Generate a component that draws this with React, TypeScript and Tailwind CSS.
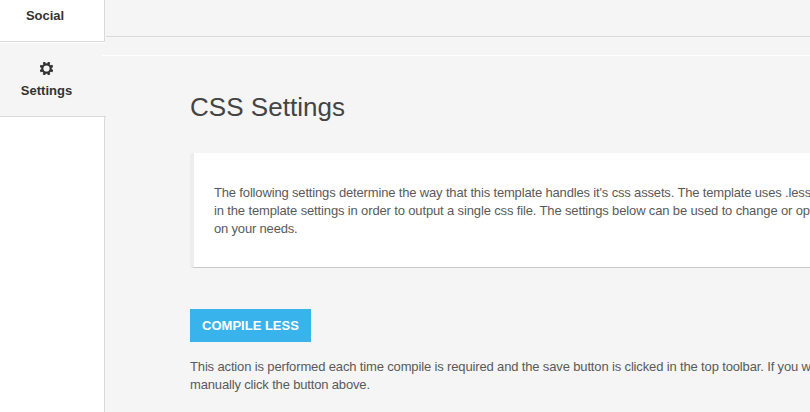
import React from "react";

interface TextLine {
  text: string;
  className: string;
}

const introLines: TextLine[] = [
  {
    text: "The following settings determine the way that this template handles it's css assets. The template uses .less",
    className: "tracking-[-0.16px]",
  },
  {
    text: "in the template settings in order to output a single css file. The settings below can be used to change or op",
    className: "tracking-[-0.14px]",
  },
  { text: "on your needs.", className: "tracking-[-0.18px]" },
];

const actionLines: TextLine[] = [
  {
    text: "This action is performed each time compile is required and the save button is clicked in the top toolbar. If you w",
    className: "tracking-[-0.145px]",
  },
  {
    text: "manually click the button above.",
    className: "tracking-[-0.16px]",
  },
];

const toothAngles = [0, 45, 90, 135, 180, 225, 270, 315];

const GearIcon: React.FC = () => (
  <svg width="13" height="13" viewBox="0 0 13 13" className="block">
    <circle
      cx="6.5"
      cy="6.5"
      r="4.2"
      fill="none"
      stroke="#333"
      strokeWidth="2.2"
    />
    {toothAngles.map((angle) => (
      <path
        key={angle}
        d="M5.1 1.8 5.3-0.4H7.7L7.9 1.8Z"
        fill="#333"
        transform={`rotate(${angle + 22.5} 6.5 6.5)`}
      />
    ))}
  </svg>
);

const Paragraph: React.FC<{ lines: TextLine[] }> = ({ lines }) => (
  <p className="text-[13px] leading-[18px] text-[#5a5a5a]">
    {lines.map((line) => (
      <span key={line.text} className="block whitespace-nowrap">
        <span className={line.className}>{line.text}</span>
      </span>
    ))}
  </p>
);

const App: React.FC = () => {
  return (
    <div className="flex h-[412px] w-full overflow-hidden bg-[#f5f5f5] font-['Liberation_Sans',Arial,sans-serif]">
      {/* Sidebar */}
      <nav className="flex w-[105px] shrink-0 flex-col text-[13px] font-bold leading-[18px] text-[#333]">
        <a className="h-[42px] border-b border-r border-[#d9d9d9] bg-white pr-[14px] pt-[7px] text-center">
          <span className="tracking-[-0.02px]">Social</span>
        </a>
        <a className="-mr-px flex h-[75px] flex-col items-center border-b border-t border-b-[#d9d9d9] border-t-white pr-[13px] pt-[19px]">
          <GearIcon />
          <span className="mt-[7px]">Settings</span>
        </a>
        <div className="flex-1 border-r border-[#d9d9d9] bg-white" />
      </nav>

      {/* Content */}
      <main className="min-w-0 flex-1">
        <div className="ml-px h-[37px] border-b border-[#d9d9d9]" />
        <div className="-ml-[3px] h-[19px] border-b border-white" />

        <div className="pl-[85px]">
          <h1 className="pt-[35px] text-[26px] leading-[32px] text-[#444]">
            <span className="tracking-[0.03px]">CSS Settings</span>
          </h1>

          <div className="mt-[30px] h-[115px] rounded-l-[2px] border-b border-l-4 border-b-[#c8c8c8] border-l-[#ededed] bg-white pl-5 pt-[31px]">
            <Paragraph lines={introLines} />
          </div>

          <button className="mt-[41px] block h-[33px] w-[121px] bg-[#38b3eb] text-[13px] font-bold leading-[33px] text-white">
            <span className="whitespace-nowrap">COMPILE LESS</span>
          </button>

          <div className="mt-4">
            <Paragraph lines={actionLines} />
          </div>
        </div>
      </main>
    </div>
  );
};

export default App;
